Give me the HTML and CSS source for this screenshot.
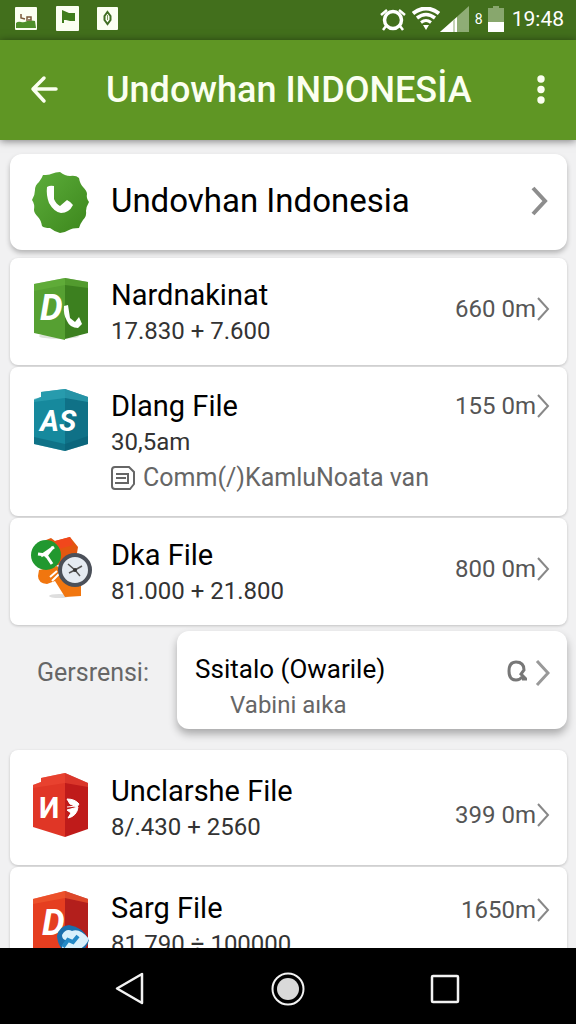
FILE: index.html
```html
<!DOCTYPE html>
<html lang="id">
<head>
	<meta charset="utf-8">
	<meta name="viewport" content="width=device-width, initial-scale=1">
	<title>Undowhan INDONESİA</title>
	<link rel="stylesheet" href="styles.css">
</head>
<body>

	<div class="status">
		<div class="notices">
			<svg width="24" height="26" viewBox="0 0 24 26">
				<rect x="1" y="1" width="22" height="23" rx="1" fill="#fbfff2"/>
				<path d="M2 17q2-2 5-1 3 1 6-1 5-1 8 0l1 7H2z" fill="#4f8f2b"/>
				<path d="M7 8v4l4 1M13 15v-4h4v3h-3" fill="none" stroke="#7a5a3a" stroke-width="1.500"/>
			</svg>
			<svg width="24" height="26" viewBox="0 0 24 26">
				<rect x="1" y="0" width="23" height="25" rx="1" fill="#fbfff2"/>
				<path d="M7 4l7 3h6v8h-5l-4-1-2 0v3H7z" fill="#3f7d1c"/>
			</svg>
			<svg width="24" height="26" viewBox="0 0 24 26">
				<rect x="1" y="1" width="21" height="23" rx="1" fill="#fbfff2"/>
				<path d="M11.500 6l3 4v4l-3 4-3-4v-4z" fill="none" stroke="#3f6d22" stroke-width="2"/>
				<path d="M11.500 9v5" stroke="#7d9c63" stroke-width="1"/>
			</svg>
		</div>
		<div class="signals">
			<svg width="26" height="26" viewBox="0 0 26 26">
				<circle cx="13" cy="14" r="8.500" fill="none" stroke="#fff" stroke-width="3.500"/>
				<path d="M1 9l6-5M25 9l-6-5M6 20l-3 4M20 20l3 4" stroke="#fff" stroke-width="2.500"/>
			</svg>
			<svg class="wifi" width="28" height="24" viewBox="0 0 28 24" fill="none" stroke="#fff">
				<path d="M1 6.500q13-10 26 0" stroke-width="4"/>
				<path d="M5 11q9-7 18 0" stroke-width="3.500"/>
				<path d="M9 15.500q5-4 10 0" stroke-width="3"/>
				<path d="M11 18h6l-3 5z" fill="#fff" stroke="none"/>
			</svg>
			<svg width="30" height="26" viewBox="0 0 30 26">
				<path d="M0 26L29 0v26z" fill="#8fad76"/>
				<path d="M0 26L17 11v15z" fill="#fff"/>
				<path d="M13 14.500l2-1.700V26h-2z" fill="#c5d4b8"/>
			</svg>
			<span class="net">8</span>
			<svg width="16" height="26" viewBox="0 0 16 26">
				<path d="M5 0h6v2h5v24H0V2h5z" fill="#88a76d"/>
				<path d="M0 16h16v10H0z" fill="#fff"/>
			</svg>
			<time class="clock">19:48</time>
		</div>
	</div>

	<header class="bar">
		<button class="icon-btn" aria-label="Back">
			<svg width="28" height="30" viewBox="0 0 28 30" fill="none" stroke="#fbfff0" stroke-width="3.500" stroke-linecap="round" stroke-linejoin="round">
				<path d="M26 14H3M14 3L3 14l11 12"/>
			</svg>
		</button>
		<h1>Undowhan INDONESİA</h1>
		<button class="icon-btn" aria-label="More">
			<svg width="8" height="30" viewBox="0 0 8 30" fill="#fbfff0">
				<circle cx="4" cy="4" r="3.700"/>
				<circle cx="4" cy="14.500" r="3.700"/>
				<circle cx="4" cy="25" r="3.700"/>
			</svg>
		</button>
	</header>

	<main>
		<a href="#" class="card lead">
			<svg class="icon" width="64" height="64" viewBox="0 0 64 64">
				<defs>
					<linearGradient id="seal" x1="0" y1="0" x2="1" y2="1">
						<stop offset="0" stop-color="#5dae3b"/>
						<stop offset="1" stop-color="#3c861c"/>
					</linearGradient>
				</defs>
				<path d="M31 3q5 4 10 4 6-1 9 2 1 6 4 9 4 4 4 7-1 4 2 8-3 5-3 9 1 5-3 9-3 4-4 8-7 0-10 2-5 3-9 3-5-1-10-5-6 0-8-2-1-6-4-9-4-4-4-7 1-6-2-10 3-5 3-10 0-5 4-8 3-4 4-7 6 0 8-1 5-2 9-2z" fill="url(#seal)"/>
				<path d="M18 18q3-2 7-1v13q2 5 6 7l7-6q4 2 6 5-4 8-12 8-7-1-12-10-3-8-2-16z" fill="#fff"/>
			</svg>
			<span class="lead-name">Undovhan Indonesia</span>
			<svg width="18" height="30" viewBox="0 0 18 30" fill="none" stroke="#8d8d8d" stroke-width="4">
				<path d="M2 2l12 13L2 28"/>
			</svg>
		</a>

		<ul class="files">
			<li><a href="#" class="card item">
				<svg class="icon" width="64" height="64" viewBox="0 0 64 64">
					<ellipse cx="30" cy="59" rx="20" ry="3" fill="#dde3da"/>
					<path d="M5 7l31-6v62L5 56z" fill="#56a032"/>
					<path d="M36 1l23 4v51l-23 6z" fill="#3c801f"/>
					<path d="M5 7l31-6 23 4v6l-23-3-31 6z" fill="#68b63d" opacity=".5"/>
					<text x="11" y="43" class="glyph big">D</text>
					<path d="M35 29l4-1 2 13 5 4 4-5 3 7-4 4q-8 0-11-7-4-7-3-15z" fill="#fff"/>
				</svg>
				<div class="text">
					<h2>Nardnakinat</h2>
					<p>17.830 + 7.600</p>
				</div>
				<span class="meta">660 0m <svg width="13" height="26" viewBox="0 0 13 26"><path d="M1 2l10 11L1 24"/></svg></span>
			</a></li>

			<li><a href="#" class="card item noted">
				<svg class="icon" width="64" height="64" viewBox="0 0 64 64">
					<path d="M5 12l7-3V4l24-3v62L5 56z" fill="#16899d"/>
					<path d="M36 1l23 8v47l-23 7z" fill="#0f7187"/>
					<path d="M12 4l24-3 23 8v5l-23-4-31 4v-3l7-2z" fill="#2fa2b3" opacity=".7"/>
					<path d="M5 49l31 7 23-8v8l-23 7-31-7z" fill="#075b72" opacity=".5"/>
					<text x="11" y="43" class="glyph">AS</text>
				</svg>
				<div class="text">
					<h2>Dlang File</h2>
					<p>30,5am</p>
					<p class="note">
						<svg width="24" height="24" viewBox="0 0 24 24" fill="none" stroke="#666" stroke-width="2">
							<path d="M4 1h14l5 5v12l-4 5H4q-3 0-3-3V4q0-3 3-3z"/>
							<path d="M5 8h12v9H4M5 12h10"/>
						</svg>
						Comm(/)KamluNoata van
					</p>
				</div>
				<span class="meta">155 0m <svg width="13" height="26" viewBox="0 0 13 26"><path d="M1 2l10 11L1 24"/></svg></span>
			</a></li>

			<li><a href="#" class="card item">
				<svg class="icon" width="64" height="64" viewBox="0 0 64 64">
					<ellipse cx="30" cy="59" rx="10" ry="2" fill="#dedede"/>
					<path d="M17 3l5-2 4 3 15-4 8 10-2 12-24 8z" fill="#e2570f"/>
					<path d="M26 4l15-4 3 8-14 4z" fill="#f1471c"/>
					<path d="M10 33l18-4 14 14 10 6v10l-16 1-10-16-8 3q-9-1-9-8z" fill="#f1760f"/>
					<path d="M23 44l7-7M21 40l7-6" stroke="#fff" stroke-width="2"/>
					<circle cx="17" cy="18" r="15" fill="#21982f"/>
					<path d="M25 10L12 19M9 17l8 1 6 9M24 10l-8 10" fill="none" stroke="#fff" stroke-width="3"/>
					<circle cx="46" cy="33" r="15" fill="#e5ebf2" stroke="#4b5059" stroke-width="4"/>
					<path d="M39 27l7 6 7-4M46 33l5 6M46 33l-6 3" fill="none" stroke="#555" stroke-width="1.500"/>
					<circle cx="46" cy="33" r="2" fill="#333"/>
				</svg>
				<div class="text">
					<h2>Dka File</h2>
					<p>81.000 + 21.800</p>
				</div>
				<span class="meta">800 0m <svg width="13" height="26" viewBox="0 0 13 26"><path d="M1 2l10 11L1 24"/></svg></span>
			</a></li>
		</ul>

		<section class="split">
			<span class="label">Gersrensi:</span>
			<a href="#" class="card pick">
				<div>
					<h3>Ssitalo (Owarile)</h3>
					<p>Vabini aıka</p>
				</div>
				<svg width="20" height="24" viewBox="0 0 20 24" fill="none" stroke="#777" stroke-width="3">
					<path d="M15 18q-2 3-6 3-7 0-7-9t7-9q8 0 8 8l-3 4 5 5h-4"/>
				</svg>
				<svg width="15" height="28" viewBox="0 0 15 28" fill="none" stroke="#999" stroke-width="3">
					<path d="M2 2l11 12L2 26"/>
				</svg>
			</a>
		</section>

		<ul class="files">
			<li><a href="#" class="card item tall">
				<svg class="icon" width="64" height="64" viewBox="0 0 64 64">
					<path d="M4 12l8-3V5l24-5v64L4 54z" fill="#e03626"/>
					<path d="M36 0l23 10v46l-23 8z" fill="#bf1b1a"/>
					<path d="M12 5l24-5 23 10v4l-23-4-32 5v-3l8-3z" fill="#ec4a36" opacity=".6"/>
					<text x="10" y="45" class="glyph upright">И</text>
					<path d="M38 26q8 0 12 5l-2 3-7-3zM38 34l9-1M38 37l11-3q-1 9-10 11l3-5z" fill="#fff" stroke="#fff"/>
				</svg>
				<div class="text">
					<h2>Unclarshe File</h2>
					<p>8/.430 + 2560</p>
				</div>
				<span class="meta low">399 0m <svg width="13" height="26" viewBox="0 0 13 26"><path d="M1 2l10 11L1 24"/></svg></span>
			</a></li>

			<li><a href="#" class="card item tall top">
				<svg class="icon" width="64" height="64" viewBox="0 0 64 64">
					<path d="M4 9l32-8v63L4 60z" fill="#e53e20"/>
					<path d="M36 1l23 8v51l-23 4z" fill="#b31f1c"/>
					<path d="M4 9l32-8 23 8v4l-23-5-32 6z" fill="#f0592f" opacity=".7"/>
					<text x="13" y="45" class="glyph big">D</text>
					<path d="M28 46q2-10 12-11 14 2 20 15-3 13-18 15-13-5-14-19z" fill="#1b70ad"/>
					<path d="M33 45q4-7 10-4 8-3 17 8-4 9-12 11-9 3-15-1 0-6 6-9-6 1-6-5z" fill="#d9f1fc"/>
					<path d="M34 57l5-7 5 2 5-6" fill="none" stroke="#2389c6" stroke-width="4"/>
				</svg>
				<div class="text">
					<h2>Sarg File</h2>
					<p>81.790 ÷ 100000</p>
				</div>
				<span class="meta">1650m <svg width="13" height="26" viewBox="0 0 13 26"><path d="M1 2l10 11L1 24"/></svg></span>
			</a></li>
		</ul>
	</main>

	<nav class="keys">
		<button class="icon-btn" aria-label="Back">
			<svg width="34" height="34" viewBox="0 0 34 34"><path d="M30 2v29L5 16.500z" fill="none" stroke="#f2f2f2" stroke-width="2.500" stroke-linejoin="round"/></svg>
		</button>
		<button class="icon-btn" aria-label="Home">
			<svg width="34" height="34" viewBox="0 0 34 34"><circle cx="17" cy="17" r="15.500" fill="none" stroke="#f2f2f2" stroke-width="2"/><circle cx="17" cy="17" r="11" fill="#d9d9d9"/></svg>
		</button>
		<button class="icon-btn" aria-label="Recent apps">
			<svg width="34" height="34" viewBox="0 0 34 34"><rect x="2" y="4" width="26" height="26" rx="1" fill="none" stroke="#f2f2f2" stroke-width="2.500"/></svg>
		</button>
	</nav>

</body>
</html>
```
FILE: styles.css
```css
* {
	box-sizing: border-box;
}

body {
	margin: 0;
	height: 100vh;
	display: flex;
	flex-direction: column;
	background: #f1f1f2;
	color: #000;
	font-family: Roboto, sans-serif;
	font-size: 24px;
	line-height: 36px;
}

h1, h2, h3, p, ul {
	margin: 0;
	padding: 0;
	font-weight: 400;
}

ul {
	list-style: none;
}

a {
	color: inherit;
	text-decoration: none;
}

svg {
	display: block;
	flex: none;
}

.icon-btn {
	display: flex;
	align-items: center;
	justify-content: center;
	width: 40px;
	height: 40px;
	padding: 0;
	border: 0;
	background: none;
}

/* status bar */
.status {
	flex: none;
	height: 40px;
	padding: 0 12px 2px 14px;
	display: flex;
	align-items: center;
	justify-content: space-between;
	background: #426f1c;
	color: #fff;
}

.notices {
	display: flex;
	gap: 17px;
}

.signals {
	display: flex;
	align-items: center;
}

.wifi {
	margin-left: 6px;
}

.net {
	width: 18px;
	font-size: 14px;
	line-height: 20px;
	text-align: center;
}

.clock {
	margin-left: 8px;
	font-size: 21px;
}

/* title bar */
.bar {
	flex: none;
	position: relative;
	height: 100px;
	padding: 0 15px 0 24px;
	display: flex;
	align-items: center;
	background: #5f9624;
	box-shadow: 0 1px 8px rgba(0, 0, 0, 0.5);
}

.bar h1 {
	flex: 1;
	padding-left: 42px;
	color: #fbfff0;
	font-size: 36px;
	font-weight: 500;
}

main {
	flex: 1;
	min-height: 0;
	padding: 14px 9px 0 10px;
	overflow-y: auto;
	scrollbar-width: none;
}

.card {
	background: #fff;
	border-radius: 12px;
	box-shadow: 0 1px 3px rgba(0, 0, 0, 0.2);
}

.lead {
	height: 96px;
	margin-bottom: 8px;
	padding: 0 18px 2px 19px;
	display: flex;
	align-items: center;
	box-shadow: 0 3px 5px rgba(0, 0, 0, 0.25);
}

.lead-name {
	flex: 1;
	padding-left: 18px;
	font-size: 33px;
}

.files {
	display: flex;
	flex-direction: column;
	gap: 2px;
}

.item {
	padding: 19px 17px 16px 19px;
	display: flex;
	align-items: center;
}

.files .item {
	border-radius: 8px;
}

.item .icon {
	align-self: flex-start;
}

.text {
	flex: 1;
	padding-left: 18px;
}

.text h2 {
	font-size: 29px;
}

.text p {
	color: #333;
}

.text .note {
	display: flex;
	align-items: center;
	gap: 8px;
	color: #666;
	font-size: 25px;
}

.meta {
	padding-bottom: 8px;
	display: flex;
	align-items: center;
	gap: 1px;
	color: #555;
}

.meta svg {
	fill: none;
	stroke: #888;
	stroke-width: 2;
}

.noted {
	padding-top: 21px;
	padding-bottom: 20px;
}

.noted .meta {
	align-self: flex-start;
}

.tall {
	padding-top: 23px;
	padding-bottom: 20px;
}

.top .meta {
	align-self: flex-start;
	padding-top: 2px;
}

.low {
	padding: 12px 0 0;
}

.glyph {
	fill: #fff;
	font-size: 29px;
	font-weight: 700;
	font-style: italic;
}

.glyph.big {
	font-size: 36px;
}

.glyph.upright {
	font-style: normal;
}

/* label with the raised card beside it */
.split {
	margin: 6px 0 21px;
	display: flex;
}

.label {
	width: 30%;
	padding: 24px 0 0 27px;
	color: #666;
	font-size: 25px;
}

.pick {
	flex: 1;
	padding: 20px 17px 6px 18px;
	display: flex;
	align-items: flex-start;
	gap: 8px;
	box-shadow: 0 5px 8px rgba(0, 0, 0, 0.3);
}

.pick div {
	flex: 1;
}

.pick h3 {
	font-size: 26px;
}

.pick p {
	padding-left: 35px;
	color: #666;
}

.pick svg {
	margin-top: 8px;
}

/* system keys */
.keys {
	flex: none;
	position: relative;
	height: 76px;
	padding: 6px 19% 0;
	display: flex;
	align-items: center;
	justify-content: space-between;
	background: #000;
}
```
